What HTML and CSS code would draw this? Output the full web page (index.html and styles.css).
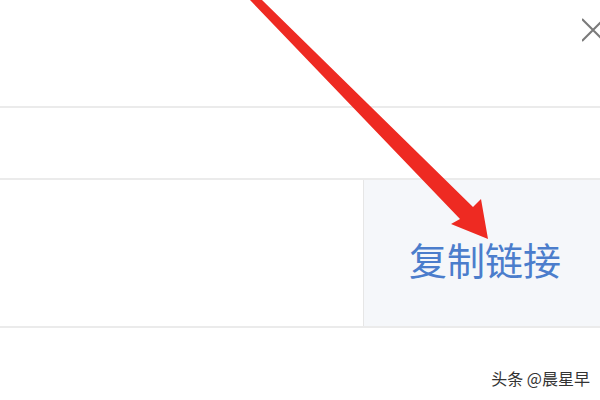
FILE: index.html
```html
<!DOCTYPE html>
<html lang="zh-CN">
<head>
  <meta charset="UTF-8">
  <meta name="viewport" content="width=device-width, initial-scale=1.0">
  <title>分享链接</title>
  <link rel="stylesheet" href="styles.css">
</head>
<body>
  <div class="dialog">
    <div class="dialog-header">
      <svg class="close" width="18" height="24" viewBox="0 0 18 24">
        <path d="M0 1 L22 23 M0 23 L22 1" stroke="#7a7a7a" stroke-width="2" fill="none"/>
      </svg>
    </div>

    <div class="field-row"></div>

    <div class="copy-row">
      <div class="link-box"></div>
      <button class="copy-btn">复制链接</button>
    </div>

    <div class="footer">
      <span class="watermark">头条 @晨星早</span>
    </div>

    <!-- red annotation arrow drawn over the dialog -->
    <svg class="arrow" width="600" height="400" viewBox="0 0 600 400">
      <polygon points="250,0 262,0 473,207 481,199 488,239 451,224 460,219" fill="#ee2a22"/>
    </svg>
  </div>
</body>
</html>
```

FILE: styles.css
```css
body {
  margin: 0;
  background: #ffffff;
  font-family: "Noto Sans CJK SC", "Noto Sans", sans-serif;
}
.dialog {
  position: relative;
  width: 600px;
  height: 400px;
  overflow: hidden;
}
.dialog-header {
  height: 108px;
  display: flex;
  justify-content: flex-end;
  align-items: flex-start;
  padding-top: 18px;
  box-sizing: border-box;
  border-bottom: 2px solid #ebebeb;
}
.field-row {
  height: 70px;
  border-bottom: 2px solid #ebebeb;
}
.copy-row {
  display: grid;
  grid-template-columns: 363px 1fr;
  height: 146px;
  border-bottom: 2px solid #ebebeb;
}
.copy-btn {
  border: none;
  border-left: 1px solid #e6e6e6;
  background: #f5f7fa;
  color: #4b7dcc;
  font-family: "Noto Sans CJK SC", sans-serif;
  font-size: 38px;
  padding: 10px 0 0 6px;
  cursor: pointer;
}
.footer {
  display: flex;
  justify-content: flex-end;
  padding: 38px 10px 0 0;
}
.watermark {
  font-size: 16px;
  color: #333333;
  text-shadow: 0 0 2px #ffffff, 0 0 2px #ffffff;
}
.arrow {
  position: absolute;
  left: 0;
  top: 0;
  pointer-events: none;
}
```
